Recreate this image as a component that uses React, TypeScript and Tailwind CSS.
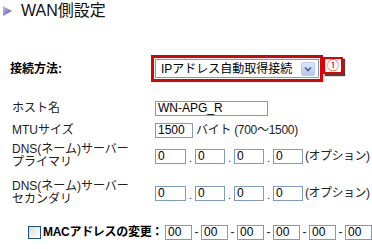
const font = { fontFamily: '"Liberation Sans", "Noto Sans CJK JP", sans-serif' };

function Box({ value, w }: { value: string; w: string }) {
  return (
    <div
      className={`${w} h-[15px] border border-[#7f9db9] bg-white text-[12px] leading-[13px] pl-[2px] text-black`}
    >
      {value}
    </div>
  );
}

function IpRow() {
  return (
    <div className="flex items-center">
      <Box value="0" w="w-[31px]" />
      <span className="w-[9px] text-center text-[11px] leading-[12px] pt-[4px]">.</span>
      <Box value="0" w="w-[30px]" />
      <span className="w-[9px] text-center text-[11px] leading-[12px] pt-[4px]">.</span>
      <Box value="0" w="w-[30px]" />
      <span className="w-[9px] text-center text-[11px] leading-[12px] pt-[4px]">.</span>
      <Box value="0" w="w-[30px]" />
      <span className="ml-[2px] text-[12px] tracking-[-0.5px]">(オプション)</span>
    </div>
  );
}

export default function App() {
  const macs = ["00", "00", "00", "00", "00", "00"];
  return (
    <div className="w-[372px] h-[249px] bg-white text-[#222] overflow-hidden" style={font}>
      {/* title */}
      <div className="flex items-center h-[20px] pl-[3px] pt-[1px]">
        <svg width="9" height="10" viewBox="0 0 9 10">
          <defs>
            <linearGradient id="tg" x1="0" y1="0" x2="1" y2="1">
              <stop offset="0" stopColor="#c8c8f0" />
              <stop offset="1" stopColor="#4a4ab8" />
            </linearGradient>
          </defs>
          <polygon points="0,0 9,5 0,10" fill="url(#tg)" />
        </svg>
        <span className="ml-[9px] text-[16px] leading-[18px] text-[#111]">WAN側設定</span>
      </div>

      {/* connection type */}
      <div className="flex items-center mt-[35px] h-[27px]">
        <div className="w-[151px] pl-[10px] text-[12px] font-bold text-black">接続方法:</div>
        <div className="w-[172px] h-[27px] border-[3px] border-[#e00000] p-[1px]">
          <div className="h-[19px] border border-[#7f9db9] bg-white flex items-center justify-between pl-[5px] pr-[3px]">
            <span className="text-[12px] whitespace-nowrap text-black">IPアドレス自動取得接続</span>
            <div className="w-[14px] h-[14px] shrink-0 bg-gradient-to-b from-[#dfe8fd] to-[#b4c8f5] border border-[#b8cbf2] rounded-[2px] flex items-center justify-center">
              <svg width="8" height="6" viewBox="0 0 8 6">
                <path d="M1 1.5 L4 4.5 L7 1.5" stroke="#4d6185" strokeWidth="1.6" fill="none" />
              </svg>
            </div>
          </div>
        </div>
        <div className="self-start mt-[2px] w-[20px] h-[17px] border-2 border-[#e00000] bg-white shadow-[2px_2px_1px_#444] flex items-center justify-center text-[12px] leading-[12px] text-[#e00000]">
          ①
        </div>
      </div>

      {/* host name */}
      <div className="flex items-center mt-[18px] h-[16px]">
        <div className="w-[155px] pl-[12px] text-[12px]">ホスト名</div>
        <Box value="WN-APG_R" w="w-[113px]" />
      </div>

      {/* MTU */}
      <div className="flex items-center mt-[6px] h-[16px]">
        <div className="w-[155px] pl-[12px] text-[12px]">MTUサイズ</div>
        <Box value="1500" w="w-[38px]" />
        <span className="ml-[3px] text-[12px] tracking-[-0.3px]">バイト (700〜1500)</span>
      </div>

      {/* DNS primary */}
      <div className="flex items-center mt-[4px] h-[28px]">
        <div className="w-[155px] pl-[12px] text-[12px] leading-[13px]">
          DNS(ネーム)サーバー
          <br />
          プライマリ
        </div>
        <IpRow />
      </div>

      {/* DNS secondary */}
      <div className="flex items-center mt-[9px] h-[28px]">
        <div className="w-[155px] pl-[12px] text-[12px] leading-[13px]">
          DNS(ネーム)サーバー
          <br />
          セカンダリ
        </div>
        <IpRow />
      </div>

      {/* MAC */}
      <div className="flex items-center mt-[17px] h-[16px]">
        <div className="w-[172px] pl-[28px] flex items-center whitespace-nowrap">
          <div className="w-[13px] h-[13px] shrink-0 border border-[#1c5180] bg-gradient-to-br from-[#dcdcd7] to-[#fff]" />
          <span className="ml-[2px] text-[12px] font-bold text-black tracking-[-0.3px]">MACアドレスの変更：</span>
        </div>
        {macs.map((m, i) => (
          <div key={i} className="flex items-center">
            {i > 0 && <span className="w-[9px] text-center text-[12px]">-</span>}
            <Box value={m} w="w-[27px]" />
          </div>
        ))}
      </div>
    </div>
  );
}
